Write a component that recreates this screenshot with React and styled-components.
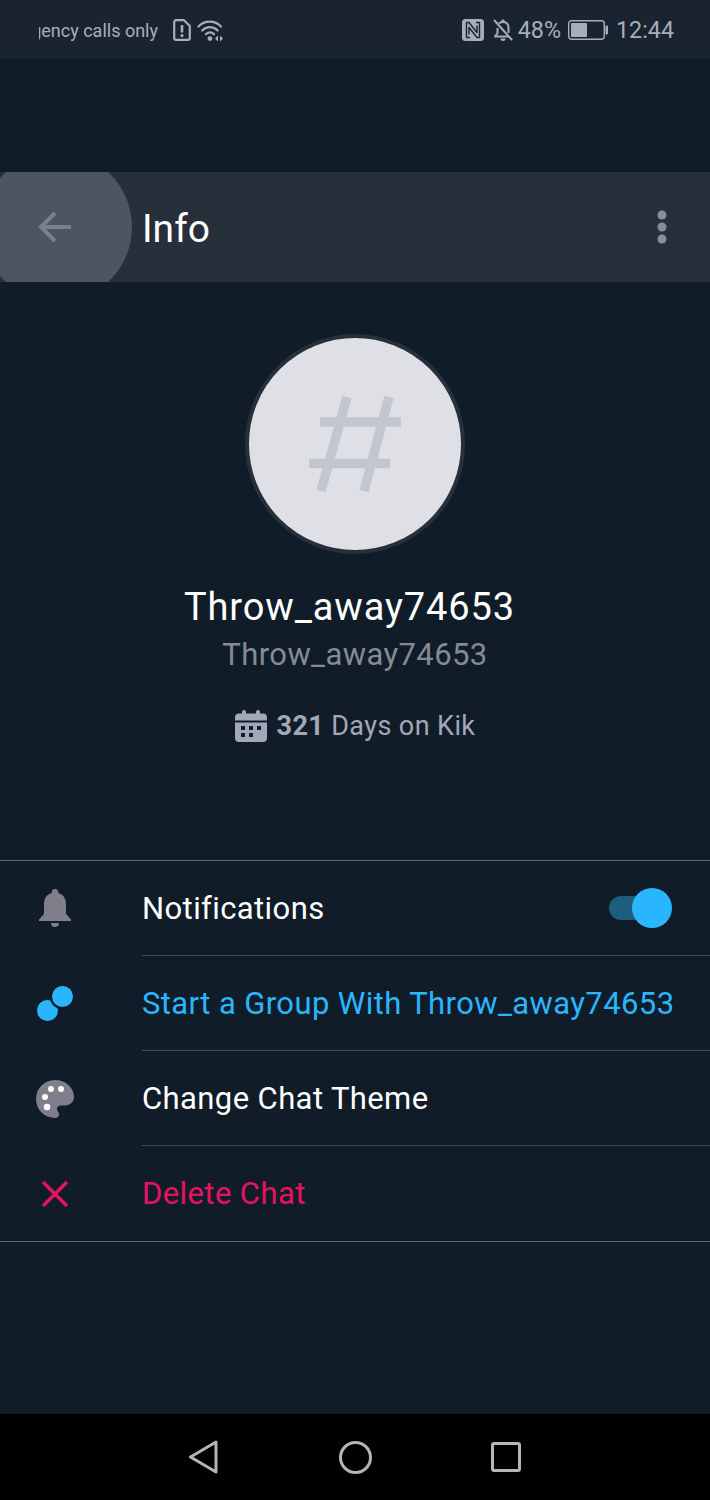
import React from 'react';
import styled, { createGlobalStyle } from 'styled-components';

const GlobalStyle = createGlobalStyle`
  html, body {
    margin: 0;
    padding: 0;
    background: #111c29;
  }
  body {
    font-family: Roboto, "Liberation Sans", sans-serif;
  }
`;

const Screen = styled.div`
  width: 710px;
  height: 1500px;
  display: flex;
  flex-direction: column;
  overflow: hidden;
  background: #111c29;
`;

const StatusBar = styled.div`
  height: 58px;
  flex: none;
  display: flex;
  align-items: center;
  justify-content: space-between;
  padding: 2px 36px 0 39px;
  box-sizing: border-box;
  background: #1a2431;
  color: #a9adb7;
`;

const StatusGroup = styled.div`
  display: flex;
  align-items: center;
`;

const Carrier = styled.div`
  width: 119px;
  display: flex;
  justify-content: flex-end;
  overflow: hidden;
  white-space: nowrap;
  font-size: 18px;
  margin-right: 15px;
`;

const StatusIcon = styled.svg`
  display: block;
  flex: none;
  margin-left: ${p => p.$gap || 0}px;
`;

const StatusText = styled.span`
  font-size: 23.3px;
  margin-left: ${p => p.$gap || 0}px;
`;

const Header = styled.header`
  position: relative;
  margin-top: 114px;
  height: 110px;
  flex: none;
  display: flex;
  align-items: center;
  overflow: hidden;
  background: #272f3a;
`;

const Ripple = styled.div`
  position: absolute;
  left: -18px;
  top: -20px;
  width: 150px;
  height: 150px;
  border-radius: 50%;
  background: #4c5560;
`;

const BackSlot = styled.div`
  position: relative;
  width: 142px;
  flex: none;
  display: flex;
  padding-left: 38px;
  box-sizing: border-box;
`;

const Title = styled.h1`
  position: relative;
  flex: 1;
  margin: 0;
  padding-top: 3px;
  font-size: 39px;
  font-weight: 400;
  color: #fff;
`;

const MoreDots = styled.svg`
  display: block;
  margin-right: 43px;
`;

const Profile = styled.section`
  display: flex;
  flex-direction: column;
  align-items: center;
  padding-top: 52px;
`;

const Avatar = styled.div`
  width: 220px;
  height: 220px;
  box-sizing: border-box;
  display: flex;
  align-items: center;
  justify-content: center;
  border-radius: 50%;
  border: 4px solid #272f3a;
  background: #dfe0e6;
`;

const DisplayName = styled.div`
  margin-top: 28px;
  padding-right: 11px;
  font-size: 38px;
  line-height: 50px;
  letter-spacing: 0.87px;
  color: #fff;
`;

const UserName = styled.div`
  margin-top: 2px;
  font-size: 31px;
  line-height: 42px;
  letter-spacing: 0.4px;
  color: #858b94;
`;

const Tenure = styled.div`
  margin-top: 32px;
  display: flex;
  align-items: center;
  font-size: 27px;
  line-height: 36px;
  letter-spacing: 0.4px;
  color: #a3a8b9;
`;

const TenureCount = styled.b`
  margin: 0 7px 0 10px;
  font-weight: 700;
`;

const Options = styled.ul`
  list-style: none;
  margin: 116px 0 0;
  padding: 0;
  border-top: 1px solid #5f6670;
  border-bottom: 1px solid #5f6670;
`;

const Option = styled.li`
  height: 95px;
  display: flex;
`;

const OptionIcon = styled.div`
  width: 110px;
  margin-right: 32px;
  flex: none;
  display: flex;
  align-items: center;
  justify-content: center;
`;

const OptionBody = styled.div`
  flex: 1;
  display: flex;
  align-items: center;
  justify-content: space-between;
  border-bottom: ${p => (p.$last ? 'none' : '1px solid #434a55')};
  font-size: 31px;
  letter-spacing: 0.4px;
  white-space: nowrap;
  color: ${p => p.$color || '#fff'};
`;

const Toggle = styled.div`
  position: relative;
  width: 56px;
  height: 24px;
  margin-right: 45px;
  border-radius: 12px;
  background: #1e5d7e;
`;

const ToggleThumb = styled.div`
  position: absolute;
  right: -7px;
  top: -8px;
  width: 40px;
  height: 40px;
  border-radius: 50%;
  background: #29b6ff;
`;

const NavBar = styled.nav`
  margin-top: auto;
  height: 86px;
  flex: none;
  display: flex;
  align-items: center;
  justify-content: center;
  background: #000;
`;

const NavSlot = styled.div`
  width: 151px;
  display: flex;
  justify-content: center;
`;

const SimAlertIcon = () => (
  <StatusIcon width="18" height="22" viewBox="0 0 18 22">
    <path d="M3 1.2h8l5.8 5.8v12a1.8 1.8 0 0 1-1.8 1.8H3A1.8 1.8 0 0 1 1.2 19V3A1.8 1.8 0 0 1 3 1.2z" fill="none" stroke="currentColor" strokeWidth="2.2" strokeLinejoin="round" />
    <path d="M9 6v7.5" stroke="currentColor" strokeWidth="2.6" />
    <circle cx="9" cy="16.6" r="1.6" fill="currentColor" />
  </StatusIcon>
);

const WifiIcon = () => (
  <StatusIcon $gap={6} width="27" height="23" viewBox="0 0 27 23">
    <g fill="none" stroke="currentColor" strokeWidth="2.2" strokeLinecap="round">
      <path d="M1.5 7.5C7.5 1 18 1 24 7.5" />
      <path d="M5.2 11.5c4.5-4.5 11-4.5 15.5 0" />
      <path d="M9 15.2c2.5-2.2 5.500-2.200 8 0" />
    </g>
    <circle cx="13" cy="19.6" r="2.4" fill="currentColor" />
    <path d="M21 16.5v6l-3-3zM23 16.5v6l3-3z" fill="currentColor" />
  </StatusIcon>
);

const NfcIcon = () => (
  <StatusIcon width="22" height="22" viewBox="0 0 22 22">
    <rect width="22" height="22" rx="3.5" fill="currentColor" />
    <g fill="none" stroke="#1a2431" strokeWidth="1.400" strokeLinejoin="round">
      <path d="M8 18.500H4.500v-15H7l8 10V6.500" />
      <path d="M14 3.500h3.500v15H15l-8-10v7" />
    </g>
  </StatusIcon>
);

const BellOffIcon = () => (
  <StatusIcon $gap={9} width="20" height="23" viewBox="0 0 20 23">
    <g fill="none" stroke="currentColor" strokeWidth="2" strokeLinejoin="round">
      <path d="M4.500 9v5L2 17.600h14" />
      <path d="M6 4.500C7 3.400 8.400 3 10 3c3.400 0 5.500 2.400 5.500 6v5" />
      <path d="M1.500 1.500l17 19" strokeLinecap="round" />
    </g>
    <path d="M10 .5a1.600 1.600 0 0 1 1.600 2.400H8.400A1.600 1.600 0 0 1 10 .5zM7.500 19.500h5a2.500 2.500 0 0 1-5 0z" fill="currentColor" />
  </StatusIcon>
);

const BatteryIcon = () => (
  <StatusIcon $gap={7} width="40" height="20" viewBox="0 0 40 20">
    <rect x="0.7" y="0.7" width="35.600" height="18.600" rx="3" fill="none" stroke="currentColor" strokeWidth="1.400" />
    <rect x="3" y="3" width="16" height="14" rx="1" fill="currentColor" />
    <rect x="37.500" y="5.500" width="2.500" height="9" rx="1" fill="currentColor" />
  </StatusIcon>
);

const BackArrow = () => (
  <svg width="34" height="32" viewBox="0 0 34 32" style={{ display: 'block' }}>
    <path d="M33 16H4M17 2L3 16l14 14" fill="none" stroke="#7d7f8d" strokeWidth="4" />
  </svg>
);

const HashMark = () => (
  <svg width="100" height="100" viewBox="0 0 100 100">
    <g stroke="#c3c5d1" strokeWidth="9.500" fill="none">
      <path d="M42 3L16 97M84 3L59 97M15 28h81M4 69.500h81" />
    </g>
  </svg>
);

const CalendarIcon = () => (
  <svg width="32" height="32" viewBox="0 0 32 32" style={{ display: 'block' }}>
    <path fillRule="evenodd" fill="#a3a8b9" d="M9 0a2 2 0 0 1 2 2v1.500h10V2a2 2 0 0 1 4 0v1.500h3a4 4 0 0 1 4 4v3H0v-3a4 4 0 0 1 4-4h3V2a2 2 0 0 1 2-2zM0 12.500h32V28a4 4 0 0 1-4 4H4a4 4 0 0 1-4-4zM6 16v4h4v-4zm8 0v4h4v-4zm8 0v4h4v-4zM6 23v4h4v-4zm8 0v4h4v-4z" />
  </svg>
);

const BellIcon = () => (
  <svg width="32" height="40" viewBox="0 0 32 40">
    <path fill="#7e7f8b" d="M16 0a3.200 3.200 0 0 1 3.200 3.200v.8C24.800 5.500 27 10 27 15.500V25l5 5.500V32H0v-1.500L5 25v-9.500C5 10 7.200 5.500 12.800 4v-.8A3.200 3.200 0 0 1 16 0zM12 34h8a4 4 0 0 1-8 0z" />
  </svg>
);

const GroupIcon = () => (
  <svg width="36" height="35" viewBox="0 0 36 35">
    <circle cx="10.500" cy="24.500" r="10.500" fill="#29b6ff" />
    <circle cx="25.500" cy="10.500" r="12.800" fill="#111c29" />
    <circle cx="25.500" cy="10.500" r="10.500" fill="#29b6ff" />
  </svg>
);

const PaletteIcon = () => (
  <svg width="38" height="38" viewBox="0 0 38 38">
    <path fill="#7e7f8b" d="M19 0C8.500 0 0 8.500 0 19s8.500 19 19 19c2.500 0 4-1.800 4-3.800 0-1-.4-1.900-1-2.600-.6-.8-1-1.600-1-2.500 0-2 1.600-3.600 3.600-3.600H29c5 0 9-3.800 9-8.500C38 7.500 29.500 0 19 0z" />
    <circle cx="15" cy="9" r="3" fill="#fff" />
    <circle cx="25" cy="9" r="3" fill="#fff" />
    <circle cx="9" cy="17" r="3" fill="#fff" />
    <circle cx="11" cy="27" r="3.300" fill="#fff" />
  </svg>
);

const CrossIcon = () => (
  <svg width="28" height="28" viewBox="0 0 28 28">
    <path d="M2 2l24 24M26 2L2 26" stroke="#e5135f" strokeWidth="3.600" fill="none" />
  </svg>
);

const App = () => (
  <Screen>
    <GlobalStyle />
    <StatusBar>
      <StatusGroup>
        <Carrier>Emergency calls only</Carrier>
        <SimAlertIcon />
        <WifiIcon />
      </StatusGroup>
      <StatusGroup>
        <NfcIcon />
        <BellOffIcon />
        <StatusText $gap={5}>48%</StatusText>
        <BatteryIcon />
        <StatusText $gap={8}>12:44</StatusText>
      </StatusGroup>
    </StatusBar>

    <Header>
      <Ripple />
      <BackSlot>
        <BackArrow />
      </BackSlot>
      <Title>Info</Title>
      <MoreDots width="10" height="34" viewBox="0 0 10 34">
        <g fill="#8a8c9a">
          <circle cx="5" cy="5" r="4.500" />
          <circle cx="5" cy="17" r="4.500" />
          <circle cx="5" cy="29" r="4.500" />
        </g>
      </MoreDots>
    </Header>

    <Profile>
      <Avatar>
        <HashMark />
      </Avatar>
      <DisplayName>Throw_away74653</DisplayName>
      <UserName>Throw_away74653</UserName>
      <Tenure>
        <CalendarIcon />
        <TenureCount>321</TenureCount>
        Days on Kik
      </Tenure>
    </Profile>

    <Options>
      <Option>
        <OptionIcon><BellIcon /></OptionIcon>
        <OptionBody>
          Notifications
          <Toggle><ToggleThumb /></Toggle>
        </OptionBody>
      </Option>
      <Option>
        <OptionIcon><GroupIcon /></OptionIcon>
        <OptionBody $color="#29b6ff">Start a Group With Throw_away74653</OptionBody>
      </Option>
      <Option>
        <OptionIcon><PaletteIcon /></OptionIcon>
        <OptionBody>Change Chat Theme</OptionBody>
      </Option>
      <Option>
        <OptionIcon><CrossIcon /></OptionIcon>
        <OptionBody $color="#e5135f" $last>Delete Chat</OptionBody>
      </Option>
    </Options>

    <NavBar>
      <NavSlot>
        <svg width="30" height="34" viewBox="0 0 30 34">
          <path d="M27 2L1.500 17 27 32z" fill="none" stroke="#b5b5b5" strokeWidth="3" strokeLinejoin="round" />
        </svg>
      </NavSlot>
      <NavSlot>
        <svg width="33" height="33" viewBox="0 0 33 33">
          <circle cx="16.500" cy="16.500" r="15" fill="none" stroke="#b5b5b5" strokeWidth="3" />
        </svg>
      </NavSlot>
      <NavSlot>
        <svg width="30" height="30" viewBox="0 0 30 30">
          <rect x="1.500" y="1.500" width="27" height="27" rx="1.500" fill="none" stroke="#b5b5b5" strokeWidth="3" />
        </svg>
      </NavSlot>
    </NavBar>
  </Screen>
);

export default App;
